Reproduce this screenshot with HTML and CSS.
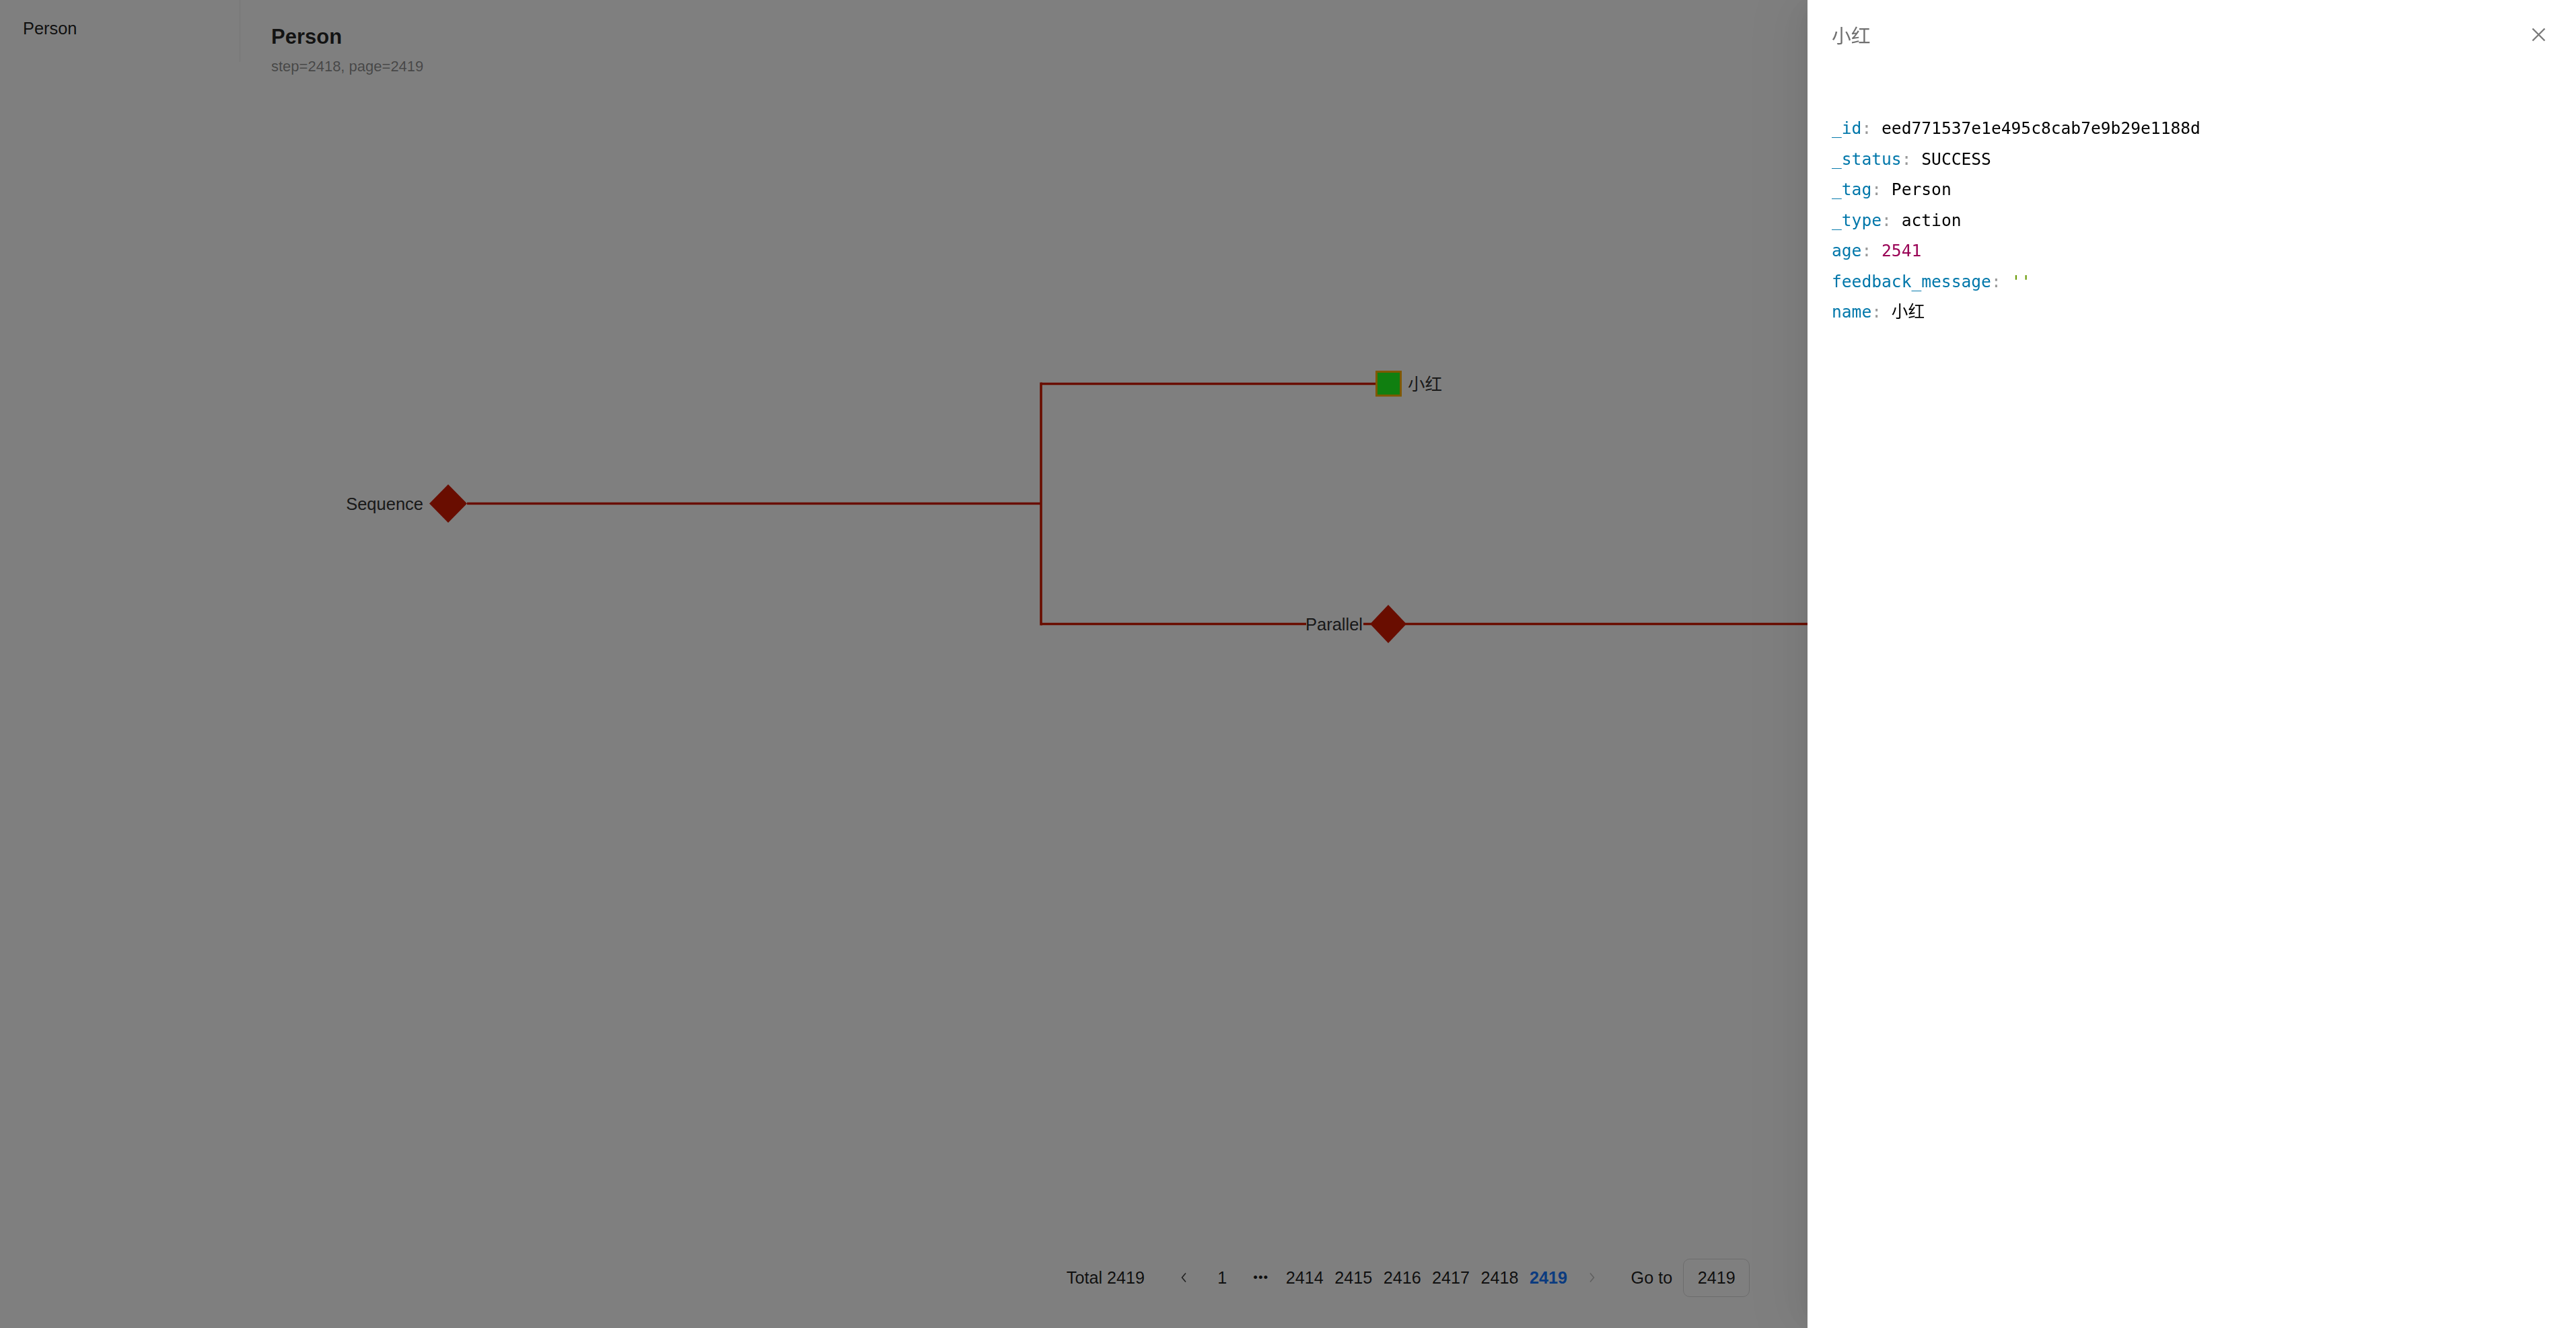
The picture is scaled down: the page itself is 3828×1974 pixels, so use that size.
FILE: index.html
```html
<!DOCTYPE html>
<html lang="zh-CN">
<head>
<meta charset="utf-8">
<title>Person</title>
<link rel="stylesheet" href="styles.css">
</head>
<body>
<div class="app">
  <aside class="sidebar">
    <div class="menu">
      <div class="menu-item">Person</div>
    </div>
  </aside>
  <main class="main">
    <header class="page-header">
      <h1 class="title">Person</h1>
      <div class="subtitle">step=2418, page=2419</div>
    </header>
    <div class="canvas">
      <svg class="tree" width="3471" height="1757" viewBox="357 114 3471 1757" xmlns="http://www.w3.org/2000/svg">
        <g class="links">
          <line x1="694" y1="748.5" x2="1547" y2="748.5"/>
          <line x1="1547" y1="568.5" x2="1547" y2="929.5"/>
          <line x1="1547" y1="570.5" x2="2045" y2="570.5"/>
          <line x1="1547" y1="927.5" x2="3000" y2="927.5"/>
        </g>
        <g class="node composite">
          <text class="label" x="629" y="757.5" text-anchor="end">Sequence</text>
          <polygon class="diamond" points="666,720 694,748.5 666,777 638,748.5"/>
        </g>
        <g class="node action">
          <rect class="leaf" x="2045.5" y="552.5" width="36" height="35.5"/>
          <text class="label" x="2092" y="580">小红</text>
        </g>
        <g class="node composite">
          <rect class="label-bg" x="1941" y="910" width="85" height="34"/>
          <text class="label" x="2025" y="937" text-anchor="end">Parallel</text>
          <polygon class="diamond" points="2063,899 2090,927.5 2063,956 2036,927.5"/>
        </g>
      </svg>
    </div>
    <nav class="pagination">
      <span class="total">Total 2419</span>
      <ul class="page-list">
        <li class="page-item nav">
          <svg width="10" height="16" viewBox="0 0 10 16"><path d="M8 1.5 L2.5 8 L8 14.5" fill="none" stroke="currentColor" stroke-width="1.6"/></svg>
        </li>
        <li class="page-item">1</li>
        <li class="page-item dots">•••</li>
        <li class="page-item">2414</li>
        <li class="page-item">2415</li>
        <li class="page-item">2416</li>
        <li class="page-item">2417</li>
        <li class="page-item">2418</li>
        <li class="page-item active">2419</li>
        <li class="page-item nav disabled">
          <svg width="10" height="16" viewBox="0 0 10 16"><path d="M2 1.5 L7.5 8 L2 14.5" fill="none" stroke="currentColor" stroke-width="1.6"/></svg>
        </li>
      </ul>
      <div class="jumper">
        <span>Go to</span>
        <input class="jumper-input" type="text" value="2419">
      </div>
    </nav>
  </main>
</div>
<div class="mask"></div>
<aside class="drawer">
  <div class="drawer-header">
    <span class="drawer-title">小红</span>
    <button class="close" aria-label="Close">
      <svg width="21" height="21" viewBox="0 0 21 21"><path d="M1.5 1.5 L19.5 19.5 M19.5 1.5 L1.5 19.5" fill="none" stroke="currentColor" stroke-width="2.4"/></svg>
    </button>
  </div>
  <div class="drawer-body">
<pre class="code"><span class="k">_id</span><span class="p">:</span> eed771537e1e495c8cab7e9b29e1188d
<span class="k">_status</span><span class="p">:</span> SUCCESS
<span class="k">_tag</span><span class="p">:</span> Person
<span class="k">_type</span><span class="p">:</span> action
<span class="k">age</span><span class="p">:</span> <span class="n">2541</span>
<span class="k">feedback_message</span><span class="p">:</span> <span class="s">''</span>
<span class="k">name</span><span class="p">:</span> 小红</pre>
  </div>
</aside>
</body>
</html>
```
FILE: styles.css
```css
* {
  box-sizing: border-box;
  margin: 0;
  padding: 0;
}

html, body {
  width: 100%;
  height: 100%;
}

body {
  font-family: "Liberation Sans", Arial, "Noto Sans CJK SC", sans-serif;
  background: #fff;
  color: rgba(0, 0, 0, 0.88);
  overflow: hidden;
}

.app {
  display: flex;
  height: 1974px;
}

.sidebar {
  width: 357px;
  flex: none;
}

.menu {
  height: 92px;
  border-right: 1px solid #ececec;
}

.menu-item {
  padding-left: 34px;
  line-height: 85px;
  font-size: 25.4px;
  color: rgba(0, 0, 0, 0.88);
}

.main {
  flex: 1;
  min-width: 0;
  display: flex;
  flex-direction: column;
}

.page-header {
  padding: 35px 0 0 46px;
}

.title {
  font-size: 31px;
  font-weight: 700;
  line-height: 40px;
  color: rgba(0, 0, 0, 0.85);
}

.subtitle {
  margin-top: 9px;
  font-size: 22px;
  line-height: 30px;
  color: rgba(0, 0, 0, 0.45);
}

.canvas {
  flex: 1;
  position: relative;
}

.tree {
  position: absolute;
  left: 0;
  top: 0;
}

.links line {
  stroke: #d31a00;
  stroke-width: 3.6;
}

.diamond {
  fill: #d31a00;
}

.leaf {
  fill: #20ff20;
  stroke: #ffb000;
  stroke-width: 3;
}

.label {
  font-family: "Liberation Sans", Arial, "Noto Sans CJK SC", sans-serif;
  font-size: 25.5px;
  fill: #333;
}

.label-bg {
  fill: #fff;
}

.pagination {
  display: flex;
  align-items: center;
  justify-content: center;
  height: 57.6px;
  margin-bottom: 46px;
  font-size: 25.2px;
  color: rgba(0, 0, 0, 0.88);
}

.total {
  margin-right: 36px;
}

.page-list {
  display: flex;
  list-style: none;
}

.page-item {
  min-width: 43.2px;
  height: 57.6px;
  padding: 0 1px;
  margin-right: 14.4px;
  display: flex;
  align-items: center;
  justify-content: center;
}

.page-item.nav {
  color: rgba(0, 0, 0, 0.75);
}

.page-item.nav.disabled {
  color: rgba(0, 0, 0, 0.25);
}

.page-item.dots {
  font-size: 19px;
  letter-spacing: 1px;
}

.page-item.active {
  color: #1677ff;
  font-weight: 700;
}

.jumper {
  margin-left: 21.6px;
  display: flex;
  align-items: center;
}

.jumper-input {
  margin-left: 16px;
  width: 99px;
  height: 57px;
  border: 1px solid #d9d9d9;
  border-radius: 10px;
  background: #fff;
  text-align: center;
  font: inherit;
  color: rgba(0, 0, 0, 0.88);
}

.mask {
  position: fixed;
  inset: 0;
  background: rgba(0, 0, 0, 0.5);
}

.drawer {
  position: fixed;
  top: 0;
  right: 0;
  bottom: 0;
  width: 1142px;
  background: #fff;
  display: flex;
  flex-direction: column;
  box-shadow: -22px 0 86px 29px rgba(0, 0, 0, 0.03),
              -16px 0 50px 0 rgba(0, 0, 0, 0.05),
              -11px 0 29px -14px rgba(0, 0, 0, 0.08);
}

.drawer-header {
  height: 102px;
  padding: 0 45px 0 36px;
  display: flex;
  align-items: center;
  justify-content: space-between;
}

.drawer-title {
  font-family: "Noto Sans CJK SC", sans-serif;
  font-size: 28.8px;
  color: #707070;
}

.close {
  width: 21px;
  height: 21px;
  border: none;
  background: none;
  color: #7a7a7a;
  display: flex;
}

.drawer-body {
  padding: 66px 36px 0;
}

.code {
  font-family: "DejaVu Sans Mono", "Liberation Mono", "Noto Sans CJK SC", monospace;
  font-size: 24.6px;
  line-height: 45.5px;
  color: #000;
}

.code .k {
  color: #07a;
}

.code .p {
  color: #999;
}

.code .n {
  color: #905;
}

.code .s {
  color: #690;
}
```
